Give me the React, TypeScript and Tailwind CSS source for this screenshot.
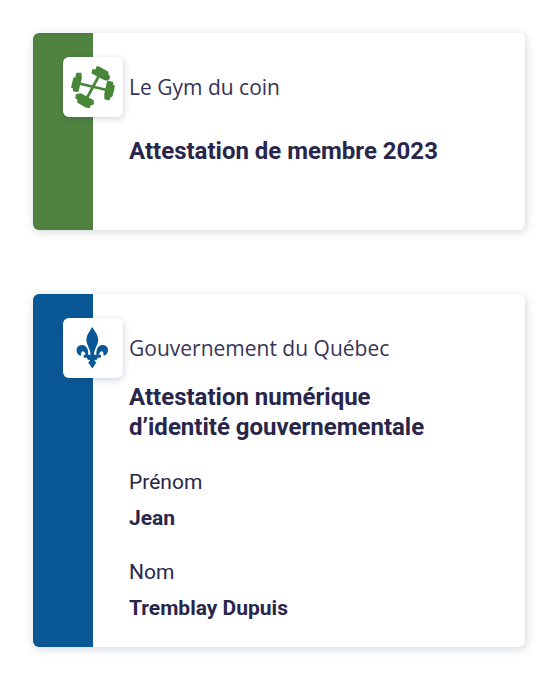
import type { ReactNode } from "react";

function DumbbellIcon() {
  return (
    <svg viewBox="0 0 60 60" className="size-[60px]" fill="none" stroke="#488638" strokeLinejoin="round">
      <path d="M14 26 46 33.500M38 15 22 44.500" strokeWidth="2.700" />
      <g fill="#488638" strokeWidth="1.800">
        <path d="M14 16.700 17.600 16.600 18 21 14.700 34 10.900 33.600 10.800 31 9 30.200 11.200 21.300 13.200 21Z" />
        <path d="M45.800 24.800 49.200 25.600 49.300 28.300 51 29.300 48.600 39 46.800 39.200 46 42.300 42.300 41.600 42.100 37.500 44.800 25Z" />
        <path d="M34.200 10 36.200 10.500 44.600 15.400 44.500 17.800 46.200 19.700 45.300 22.600 42 22.500 29.500 16 30 13.100 33.500 13.200Z" />
        <path d="M13.700 38 17.500 37.100 29.900 43.900 30 46.800 26.900 47.500 26.200 50.200 23 49.600 15 45 15.300 42.400 13.200 40.700Z" />
      </g>
    </svg>
  );
}

function FleurDeLysIcon() {
  return (
    <svg viewBox="0 0 60 60" className="size-[60px]" fill="#0a5796">
      <path d="M29.300 9C31.500 13 35.200 16.500 35.200 22 35.200 27 31.500 30 31 36.700H33.400C33 31 35.500 27.100 39.500 27.100 42.800 27.100 45 29.300 45 32.300 45 35.300 43 37.600 40.400 37.600 41 34.500 39.600 32.800 38 33.500 36.500 34.200 36.100 35.500 36.100 36.700H37.900V39.800H34.500C34.400 42 33 42.600 31.700 41.400 31.500 42.800 32.500 44.300 34 44.900 32.500 45.200 31.700 46.200 31.600 47.300L29.300 50.500 27 47.300C26.900 46.200 26.100 45.200 24.600 44.900 26.100 44.300 27.100 42.800 26.900 41.400 25.600 42.600 24.200 42 24.100 39.800H20.700V36.700H22.500C22.500 35.500 22.100 34.200 20.600 33.500 19 32.800 17.600 34.500 18.200 37.600 15.600 37.600 13.600 35.300 13.600 32.300 13.600 29.300 15.800 27.100 19.100 27.100 23.100 27.100 25.600 31 25.200 36.700H27.600C27.100 30 23.400 27 23.400 22 23.400 16.500 27.100 13 29.300 9Z" />
    </svg>
  );
}

function Card({ band, height, issuer, icon, children }: { band: string; height: string; issuer: string; icon: ReactNode; children: ReactNode }) {
  return (
    <section className={`flex w-[492px] rounded-md bg-white shadow-[1px_2px_10px_rgba(34,48,84,0.2)] ${height}`}>
      <div className={`w-[60px] shrink-0 rounded-l-md ${band}`} />
      <div className="relative z-10 mt-6 -ml-[30px] size-[60px] shrink-0 rounded-md bg-white shadow-[1px_2px_6px_rgba(34,48,84,0.2)]">{icon}</div>
      <div className="ml-[6px] pt-[39px] whitespace-nowrap">
        <p className="font-['Open_Sans',sans-serif] text-[21px] leading-[30px] font-normal text-[#373456]">{issuer}</p>
        {children}
      </div>
    </section>
  );
}

function Field({ label, value, className }: { label: string; value: string; className: string }) {
  return (
    <div className={className}>
      <dt className="text-[21px] leading-9 font-normal">{label}</dt>
      <dd className="text-[21px] leading-9 font-bold">{value}</dd>
    </div>
  );
}

export default function App() {
  return (
    <main className="flex min-h-[680px] w-[559px] flex-col gap-16 bg-white p-[33px] font-['Roboto',sans-serif] text-[#29264b]">
      <Card band="bg-[#4f823f]" height="h-[197px]" issuer="Le Gym du coin" icon={<DumbbellIcon />}>
        <h2 className="mt-[34px] text-2xl leading-[30px] font-bold">Attestation de membre 2023</h2>
      </Card>
      <Card band="bg-[#0a5796]" height="h-[353px]" issuer="Gouvernement du Québec" icon={<FleurDeLysIcon />}>
        <h2 className="mt-[19px] text-2xl leading-[30px] font-bold">Attestation numérique<br />d’identité gouvernementale</h2>
        <dl>
          <Field className="mt-[22px]" label="Prénom" value="Jean" />
          <Field className="mt-[18px]" label="Nom" value="Tremblay Dupuis" />
        </dl>
      </Card>
    </main>
  );
}
